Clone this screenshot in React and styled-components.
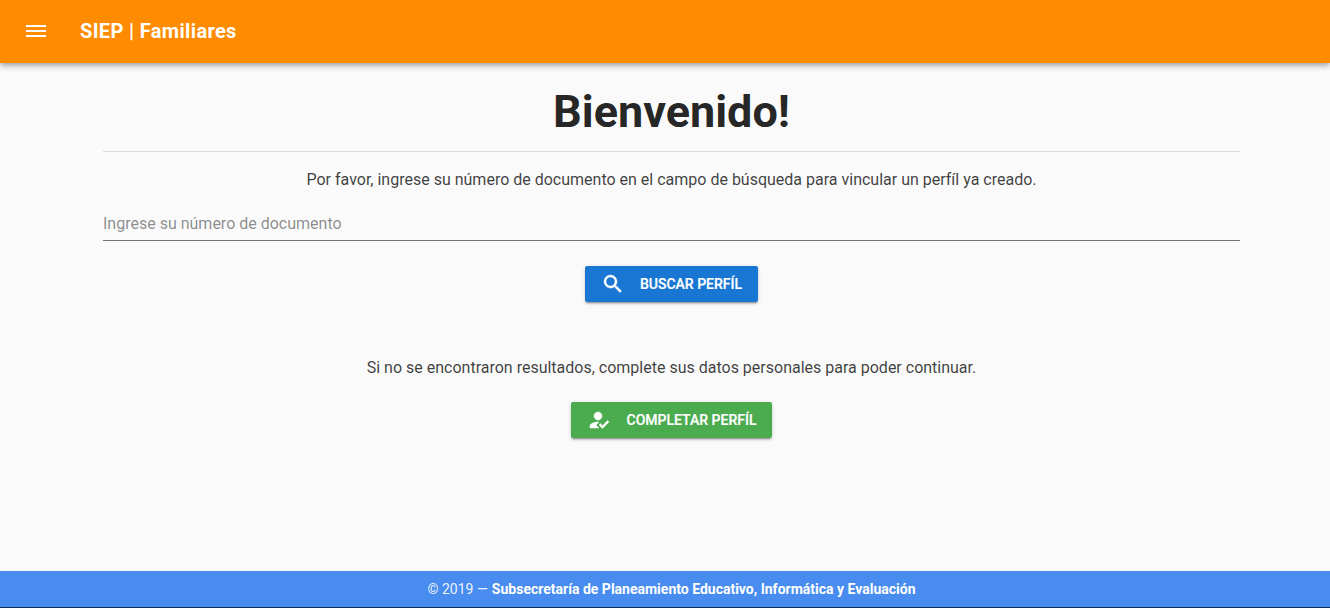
import React from 'react';
import styled, { createGlobalStyle } from 'styled-components';
import { MdMenu, MdSearch, MdHowToReg } from 'react-icons/md';

const GlobalStyle = createGlobalStyle`
    html, body, #root {
        margin: 0;
        height: 100%;
    }
    body {
        background: #fafafa;
        font-family: Roboto, "Liberation Sans", sans-serif;
        color: rgba(0, 0, 0, 0.87);
        overflow: hidden;
    }
`;

const Page = styled.div`
    display: flex;
    flex-direction: column;
    height: 608px;
`;

const Toolbar = styled.header`
    box-sizing: border-box;
    display: flex;
    align-items: center;
    flex: 0 0 63px;
    padding: 0 24px 1px;
    background: #ff8c00;
    color: #fff;
    box-shadow: 0 2px 4px -1px rgba(0, 0, 0, 0.2), 0 4px 5px 0 rgba(0, 0, 0, 0.14), 0 1px 10px 0 rgba(0, 0, 0, 0.12);
    z-index: 1;
`;

const MenuIcon = styled(MdMenu)`
    width: 24px;
    height: 24px;
    transform: scaleX(1.12);
`;

const Title = styled.div`
    margin-left: 32px;
    font-size: 20px;
    font-weight: 700;
    line-height: 32px;
    letter-spacing: 0.35px;
`;

const Main = styled.main`
    flex: 1;
    display: flex;
    flex-direction: column;
    align-items: center;
    padding: 0 90px 0 103px;
`;

const Heading = styled.h1`
    margin: 25px 0 0;
    font-size: 45px;
    font-weight: 700;
    line-height: 48px;
    color: rgba(0, 0, 0, 0.87);
`;

const Divider = styled.hr`
    align-self: stretch;
    margin: 15px 0 0;
    border: 0;
    border-top: 1px solid rgba(0, 0, 0, 0.12);
`;

const Message = styled.p`
    margin: ${(p) => p.$top}px 0 0;
    font-size: 16px;
    line-height: 24px;
    color: rgba(0, 0, 0, 0.76);
`;

const SearchInput = styled.input`
    align-self: stretch;
    box-sizing: border-box;
    height: 35px;
    margin-top: 14px;
    padding: 0;
    border: 0;
    border-bottom: 1px solid rgba(0, 0, 0, 0.54);
    background: transparent;
    font: 400 16px Roboto, sans-serif;
    outline: none;

    &::placeholder {
        color: rgba(0, 0, 0, 0.46);
        opacity: 1;
    }
`;

const Button = styled.button`
    display: flex;
    align-items: center;
    gap: ${(p) => p.$gap}px;
    height: 36px;
    margin-top: ${(p) => p.$top}px;
    padding: 0 16px;
    border: 0;
    border-radius: 2px;
    background: ${(p) => p.$color};
    color: #fff;
    font: 500 14px Roboto, sans-serif;
    -webkit-text-stroke: 0.2px #fff;
    box-shadow: 0 3px 1px -2px rgba(0, 0, 0, 0.2), 0 2px 2px 0 rgba(0, 0, 0, 0.14), 0 1px 5px 0 rgba(0, 0, 0, 0.12);
    cursor: pointer;

    svg {
        font-size: 24px;
        flex: none;
    }

    svg path:not([fill='none']) {
        stroke: currentColor;
        stroke-width: 0.5;
    }
`;

const Footer = styled.footer`
    flex: 0 0 36px;
    display: flex;
    align-items: center;
    justify-content: center;
    padding-left: 13px;
    background: #478cee;
    border-bottom: 1px solid #0d2c57;
    color: rgba(255, 255, 255, 0.9);
    font-size: 14px;
`;

const Strong = styled.b`
    margin-left: 4px;
    font-weight: 700;
    color: #fff;
`;

export default function App() {
    return (
        <Page>
            <GlobalStyle />
            <Toolbar>
                <MenuIcon />
                <Title>SIEP | Familiares</Title>
            </Toolbar>
            <Main>
                <Heading>Bienvenido!</Heading>
                <Divider />
                <Message $top={16}>
                    Por favor, ingrese su número de documento en el campo de búsqueda para vincular un perfíl ya creado.
                </Message>
                <SearchInput placeholder="Ingrese su número de documento" />
                <Button $color="#1976d2" $gap={15} $top={25}>
                    <MdSearch />
                    BUSCAR PERFÍL
                </Button>
                <Message $top={54}>
                    Si no se encontraron resultados, complete sus datos personales para poder continuar.
                </Message>
                <Button $color="#4bab4f" $gap={16} $top={22}>
                    <MdHowToReg />
                    COMPLETAR PERFÍL
                </Button>
            </Main>
            <Footer>
                © 2019 — <Strong>Subsecretaría de Planeamiento Educativo, Informática y Evaluación</Strong>
            </Footer>
        </Page>
    );
}
